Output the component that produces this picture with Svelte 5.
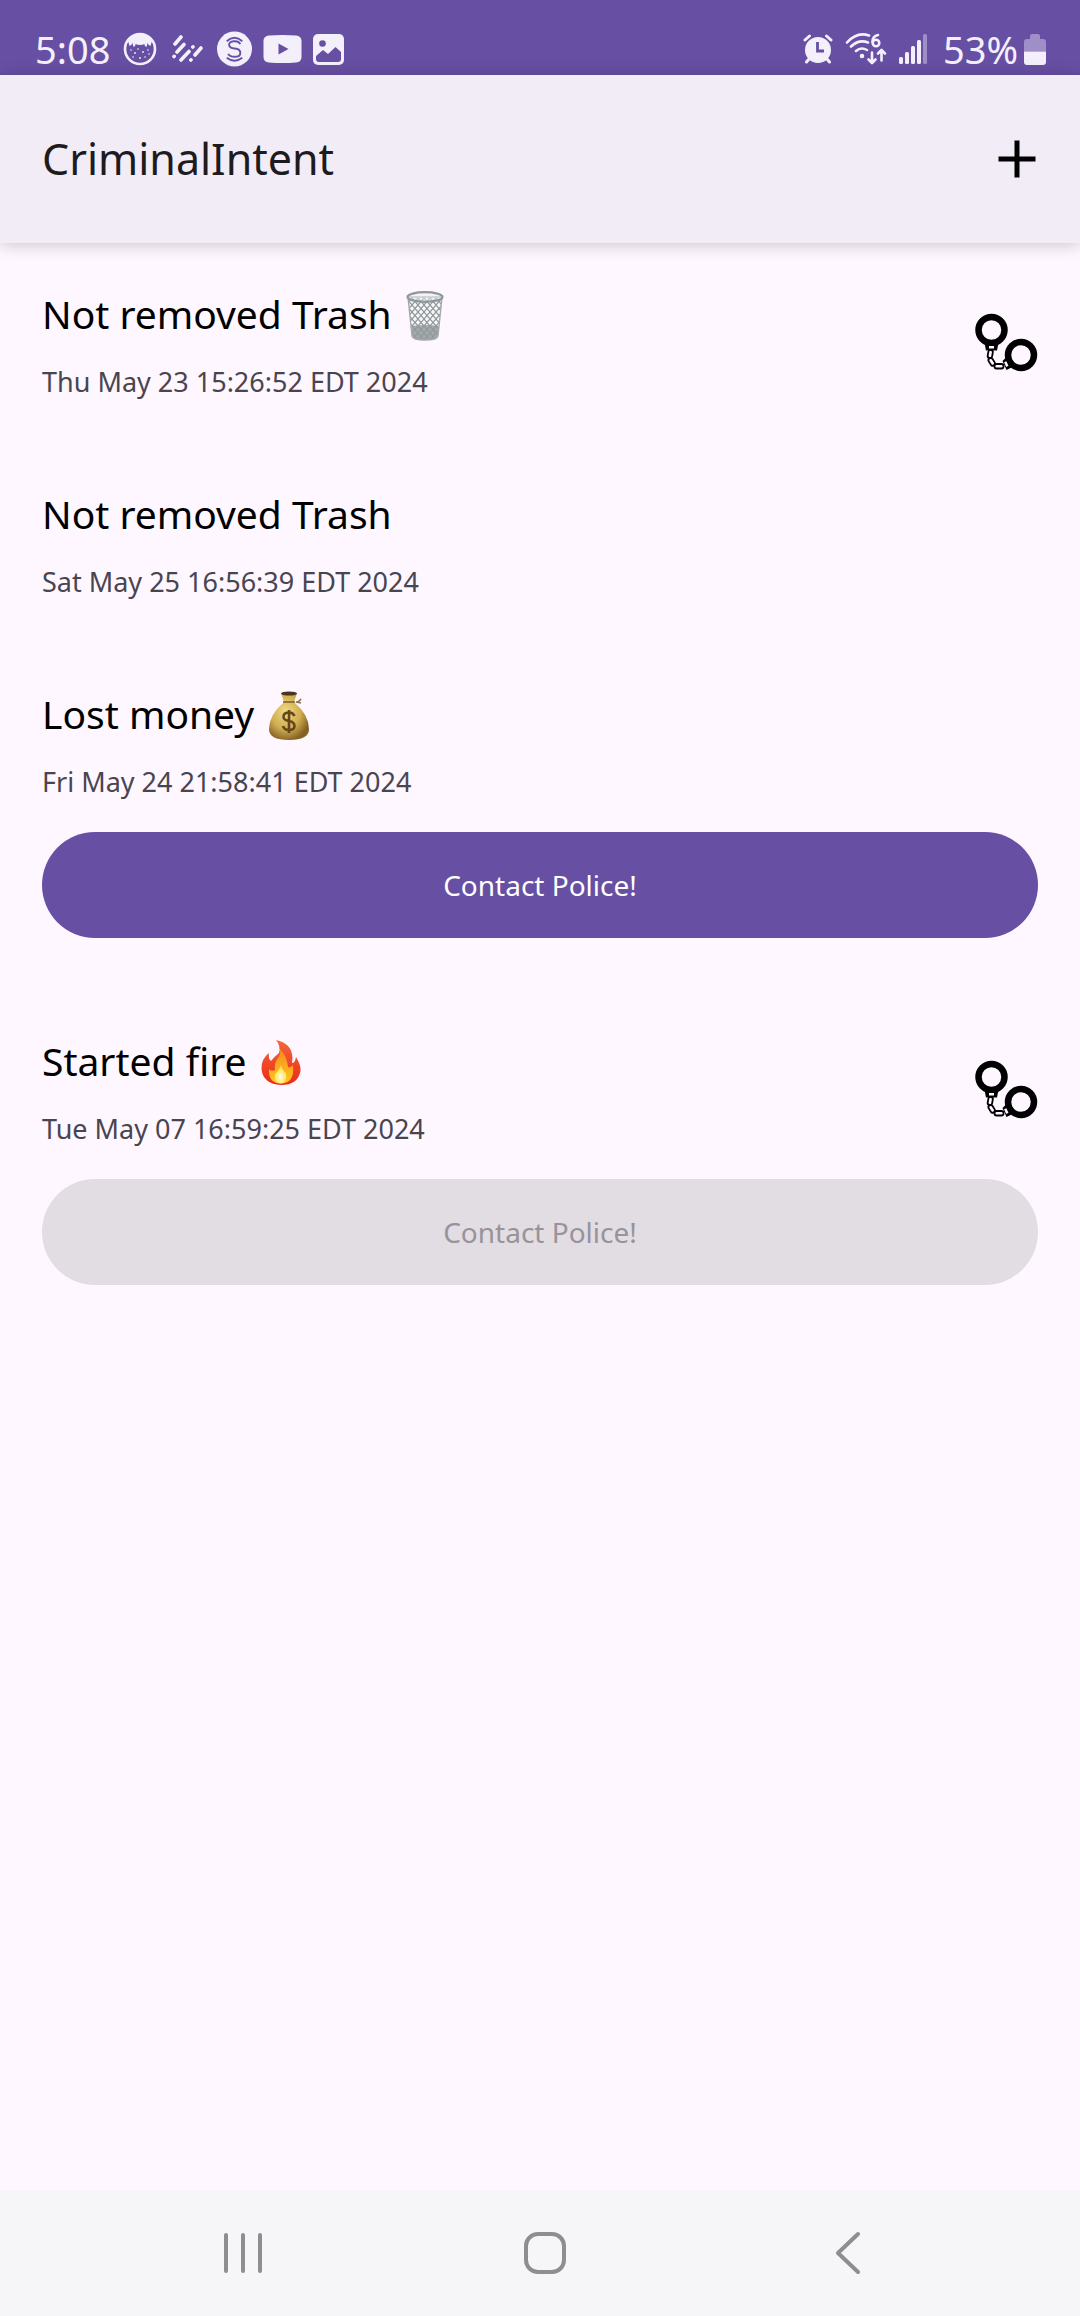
<script lang="ts">
  type Crime = { title: string; emoji?: 'trash' | 'money' | 'fire'; date: string; solved: boolean; police?: boolean };
  const crimes: Crime[] = [
    { title: 'Not removed Trash', emoji: 'trash', date: 'Thu May 23 15:26:52 EDT 2024', solved: true },
    { title: 'Not removed Trash', date: 'Sat May 25 16:56:39 EDT 2024', solved: false },
    { title: 'Lost money', emoji: 'money', date: 'Fri May 24 21:58:41 EDT 2024', solved: false, police: true },
    { title: 'Started fire', emoji: 'fire', date: 'Tue May 07 16:59:25 EDT 2024', solved: true, police: true }
  ];
</script>

<div class="screen">
  <div class="status">
    <div class="left">
      <span class="clock">5:08</span>
      <svg width="38" height="34" viewBox="-2 0 38 34" aria-hidden="true">
        <circle cx="17" cy="17" r="15" fill="none" stroke="#f3f0fc" stroke-width="2.6" />
        <path d="M5 9Q10 2 17 2T29 9L27.500 14Q25 13 24.500 11L23.500 15Q21 14 21.500 12Q17 14 12.500 12Q13 14 10.500 15L9.500 11Q9 13 6.500 14Z" fill="#f3f0fc" />
        <g fill="#f3f0fc"><circle cx="8" cy="18" r=".8" /><circle cx="12" cy="21" r=".9" /><circle cx="15" cy="17" r=".8" /><circle cx="20" cy="20" r=".9" /><circle cx="25" cy="18" r=".8" /><circle cx="17" cy="26" r=".9" /><circle cx="22" cy="25" r=".8" /><circle cx="10" cy="25" r=".8" /><circle cx="26" cy="22" r=".8" /></g>
      </svg>
      <svg width="36" height="28" viewBox="-1 0 36 28" fill="none" stroke="#f3f0fc" stroke-width="3.6" stroke-linecap="round" aria-hidden="true">
        <path d="M4 9L10 2M6 17L13 9.500M3 21.500L3.200 21.300M10 25L18 16.500M21.800 12L22 11.800M19.800 25L20 24.800M17 17.500L18 16.500M24 20L30 13" />
      </svg>
      <svg width="35" height="36" viewBox="0 0 36 36" aria-hidden="true">
        <circle cx="18" cy="18" r="18" fill="#f3f0fc" />
        <path d="M10 10Q18 3 26 10M10 27Q18 33 26 27M24 13Q22 9.500 17.500 10Q12 10.500 12.500 14Q13 17 18 17.500Q24 18 24 22Q24 26 18 26Q13 26 11.500 23" fill="none" stroke="#674fa3" stroke-width="2" />
      </svg>
      <svg width="39" height="28" viewBox="0 0 39 28" aria-hidden="true">
        <path d="M6 .5Q19.500-.5 33 .5Q38.500 1 38.500 6V22Q38.500 27 33 27.500Q19.500 28.500 6 27.500Q.5 27 .5 22V6Q.5 1 6 .5Z" fill="#f3f0fc" />
        <path d="M15.500 8.500V19.500L25.500 14Z" fill="#674fa3" />
      </svg>
      <svg width="31" height="31" viewBox="0 0 31 31" aria-hidden="true">
        <rect width="31" height="31" rx="5" fill="#f3f0fc" />
        <circle cx="9.500" cy="9.500" r="3.300" fill="#674fa3" />
        <path d="M3 22L10 16L15 20L22.500 13L28 18V25Q28 28 25 28H6Q3 28 3 25Z" fill="#674fa3" />
      </svg>
    </div>
    <div class="right">
      <svg width="30" height="30" viewBox="0 0 30 30" aria-hidden="true">
        <circle cx="15" cy="16" r="13" fill="#f3f0fc" />
        <path d="M2 6L6.500 2M28 6L23.500 2M6 25L3.500 28M24 25L26.500 28" stroke="#f3f0fc" stroke-width="3" stroke-linecap="round" />
        <path d="M14.500 8V17H21" fill="none" stroke="#674fa3" stroke-width="2.800" />
      </svg>
      <svg width="42" height="32" viewBox="0 0 42 32" fill="none" stroke="#f3f0fc" stroke-width="2.600" stroke-linecap="round" stroke-linejoin="round" aria-hidden="true">
        <path d="M2 9.500Q12-1.500 24 2.500M6 13.500Q14 6 23 9.500M11 18Q16 13.500 22 17" />
        <circle cx="17" cy="23" r="1" fill="#f3f0fc" />
        <path d="M33 2Q27.500 3 27.500 9M27 19.500V29.500M23.500 26.500L27 30L30.500 26.500M36.500 27.500V17.500M33 20.500L36.500 17L40 20.500" />
        <circle cx="31" cy="10" r="3.300" />
      </svg>
      <svg width="32" height="30" viewBox="0 0 32 30" fill="#f3f0fc" aria-hidden="true">
        <rect x="0" y="23" width="4" height="7" rx="1.500" /><rect x="6" y="18" width="4" height="12" rx="1.500" /><rect x="12" y="12" width="4" height="18" rx="1.500" /><rect x="18" y="6" width="4" height="24" rx="1.500" /><rect x="24" y="0" width="4" height="30" rx="1.500" opacity=".4" />
      </svg>
      <div class="charge">
        <span class="clock">53%</span>
        <svg width="22" height="31" viewBox="0 0 22 31" aria-hidden="true">
          <path d="M6 5V2Q6 0 8 0H14Q16 0 16 2V5H19Q22 5 22 8V17.500H0V8Q0 5 3 5Z" fill="#f3f0fc" opacity=".4" />
          <path d="M0 17.500H22V28Q22 31 19 31H3Q0 31 0 28Z" fill="#f3f0fc" />
        </svg>
      </div>
    </div>
  </div>

  <header>
    <h1>CriminalIntent</h1>
    <button aria-label="New crime">
      <svg width="38" height="38" viewBox="0 0 38 38" aria-hidden="true"><path d="M19 .5V37.500M.5 19H37.500" stroke="#000" stroke-width="5" /></svg>
    </button>
  </header>

  <main>
    {#each crimes as crime}
      <article>
        <div class="row">
          <div>
            <h2>
              <span>{crime.title}</span>
              {#if crime.emoji === 'trash'}
                <svg class="pic" width="38" height="50" viewBox="0 0 38 50" role="img" aria-label="wastebasket">
                  <defs>
                    <pattern id="mesh" width="6" height="7" patternUnits="userSpaceOnUse">
                      <path d="M0 0L6 7M6 0L0 7" stroke="#90989a" stroke-width="1.200" />
                    </pattern>
                  </defs>
                  <path d="M2 6L6 45Q7 49 19 49T32 45L36 6Z" fill="#f7f6f9" />
                  <path d="M5 35Q19 33 33 35L31.500 45Q30 49 19 49T6.500 45Z" fill="#a3aaab" />
                  <path d="M2 6L6 45Q7 49 19 49T32 45L36 6Z" fill="url(#mesh)" stroke="#a3aaac" stroke-width="1.400" />
                  <ellipse cx="19" cy="6" rx="17.500" ry="4.800" fill="#eceeee" fill-opacity=".5" stroke="#8e9799" stroke-width="2.200" />
                </svg>
              {:else if crime.emoji === 'money'}
                <svg class="pic" width="42" height="50" viewBox="0 0 42 50" role="img" aria-label="money bag">
                  <defs>
                    <radialGradient id="gold" cx=".42" cy=".4" r=".62">
                      <stop offset="0" stop-color="#f1d984" /><stop offset=".6" stop-color="#d0ad50" /><stop offset="1" stop-color="#866325" />
                    </radialGradient>
                  </defs>
                  <path d="M28 11Q31 11 33 8M28 11L33 12" fill="none" stroke="#8c7351" stroke-width="1.500" />
                  <path d="M13 2H29L26 11Q41 24 41 38Q41 49 21 49T1 38Q1 24 16 11Z" fill="url(#gold)" />
                  <ellipse cx="21" cy="2.500" rx="8" ry="2" fill="#49351f" />
                  <path d="M15 11H27" stroke="#7b5c25" stroke-width="1.500" />
                  <path d="M26.500 25Q25 21.500 21 21.500Q15.500 21.500 15.500 26Q15.500 29 21 30Q26.500 31 26.500 35Q26.500 39 21 39Q16 39 15 35M21 19V42" fill="none" stroke="#65471a" stroke-width="2.600" />
                </svg>
              {:else if crime.emoji === 'fire'}
                <svg class="pic" width="42" height="46" viewBox="-1 0 42 46" role="img" aria-label="fire">
                  <defs>
                    <linearGradient id="flame" x1="0" y1="0" x2="0" y2="1"><stop offset="0" stop-color="#f2673b" /><stop offset="1" stop-color="#ec2b18" /></linearGradient>
                    <linearGradient id="inner" x1="0" y1="0" x2="0" y2="1"><stop offset="0" stop-color="#f78a20" /><stop offset="1" stop-color="#ffc91c" /></linearGradient>
                    <radialGradient id="core" cy=".65"><stop offset="0" stop-color="#fffce0" /><stop offset="1" stop-color="#ffe34c" /></radialGradient>
                  </defs>
                  <path d="M15 0Q29 3 31 14Q32 18 31 23Q34 23 35 17Q40 25 39.500 31Q37 45 20 45Q2 44 .5 29Q0 19 8 13Q7 18 10 21Q13 17 18 13Q20 6 15 0Z" fill="url(#flame)" />
                  <path d="M19 9Q26 16 27 27Q30 28 32 25Q34 43 20 43.500Q7 43 8 29Q10 32 14 30Q13 23 17 18Q20 14 19 9Z" fill="url(#inner)" />
                  <path d="M20 25Q21 30 25 33Q27 43 20 43.500Q12 43 14 34Q18 31 20 25Z" fill="url(#core)" />
                </svg>
              {/if}
            </h2>
            <p>{crime.date}</p>
          </div>
          {#if crime.solved}
            <svg class="pic" width="64" height="60" viewBox="0 0 63 60" fill="none" stroke="#000" role="img" aria-label="Solved">
              <circle cx="17" cy="17" r="13" stroke-width="6.500" />
              <circle cx="46.500" cy="42" r="13" stroke-width="6.500" />
              <path d="M10 30H24L22.500 37.500H11.500Z" fill="#000" stroke="none" />
              <path d="M28 48L34 42L40 53L32 57Z" fill="#000" stroke="none" />
              <rect x="14.500" y="33" width="5" height="2.500" fill="#fef7ff" stroke="none" />
              <rect x="30.500" y="48.500" width="2.500" height="5" fill="#fef7ff" stroke="none" transform="rotate(-25 32 51)" />
              <g stroke-width="1.800">
                <rect x="13.500" y="37" width="4.500" height="8" rx="2" transform="rotate(10 16 41)" />
                <rect x="15" y="45" width="4.500" height="8" rx="2" transform="rotate(-32 17 49)" />
                <rect x="20" y="51" width="9" height="4.500" rx="2" />
              </g>
            </svg>
          {/if}
        </div>
        {#if crime.police}
          <button class="police" disabled={crime.solved}>Contact Police!</button>
        {/if}
      </article>
    {/each}
  </main>

  <nav>
    <button aria-label="Recent apps"><svg width="42" height="44" viewBox="0 0 42 44" fill="none" stroke="#8e8e8e" stroke-width="4" stroke-linecap="round"><path d="M4 4V40M21 4V40M38 4V40" /></svg></button>
    <button aria-label="Home"><svg width="44" height="44" viewBox="0 0 44 44" fill="none" stroke="#8e8e8e" stroke-width="4"><rect x="3" y="3" width="38" height="38" rx="12" /></svg></button>
    <button aria-label="Back"><svg width="44" height="44" viewBox="0 0 44 44" fill="none" stroke="#8e8e8e" stroke-width="4" stroke-linecap="round" stroke-linejoin="round"><path d="M32 3L12 22L32 41" /></svg></button>
  </nav>
</div>

<style>
  :global(body) { margin: 0; background: #fef7ff; }
  .screen { display: flex; flex-direction: column; min-height: 100vh; font-family: "Noto Sans", sans-serif; color: #000; }
  button { border: 0; padding: 0; background: none; font: inherit; color: inherit; }
  svg { display: block; flex: none; }
  .pic { margin-top: 3px; }
  .status { display: flex; justify-content: space-between; height: 75px; box-sizing: border-box; padding: 24px 34px 0 35px; background: #674fa3; color: #f3f0fc; }
  .left, .right, .charge { display: flex; align-items: center; height: 50px; }
  .clock { font-size: 38px; line-height: 50px; }
  .left { gap: 11px; }
  .right { gap: 12px; }
  .charge { gap: 6px; }
  header { display: flex; align-items: center; justify-content: space-between; height: 168px; box-sizing: border-box; padding: 0 44px 0 42px; background: #f2ecf7; box-shadow: 0 2px 16px rgba(0, 0, 0, .2); }
  h1 { margin: 0; font-size: 43px; line-height: 60px; font-weight: 400; color: #1d1b20; }
  main { flex: 1; }
  article { padding: 41px 42px 44px; }
  .row { display: flex; align-items: center; justify-content: space-between; }
  h2 { display: flex; align-items: center; gap: 14px; margin: 0; font-size: 39px; line-height: 60px; font-weight: 400; }
  p { margin: 21px 0 0; font-size: 27px; line-height: 34px; color: #49454f; }
  .police { display: block; width: 100%; height: 106px; margin: 33px 0 8px; border-radius: 53px; background: #674fa3; color: #fff; font-size: 28px; }
  .police:disabled { background: #e2dce3; color: #98939a; }
  nav { display: flex; align-items: center; justify-content: space-around; height: 126px; padding: 0 80px 0 92px; background: #f6f6f9; }
</style>
